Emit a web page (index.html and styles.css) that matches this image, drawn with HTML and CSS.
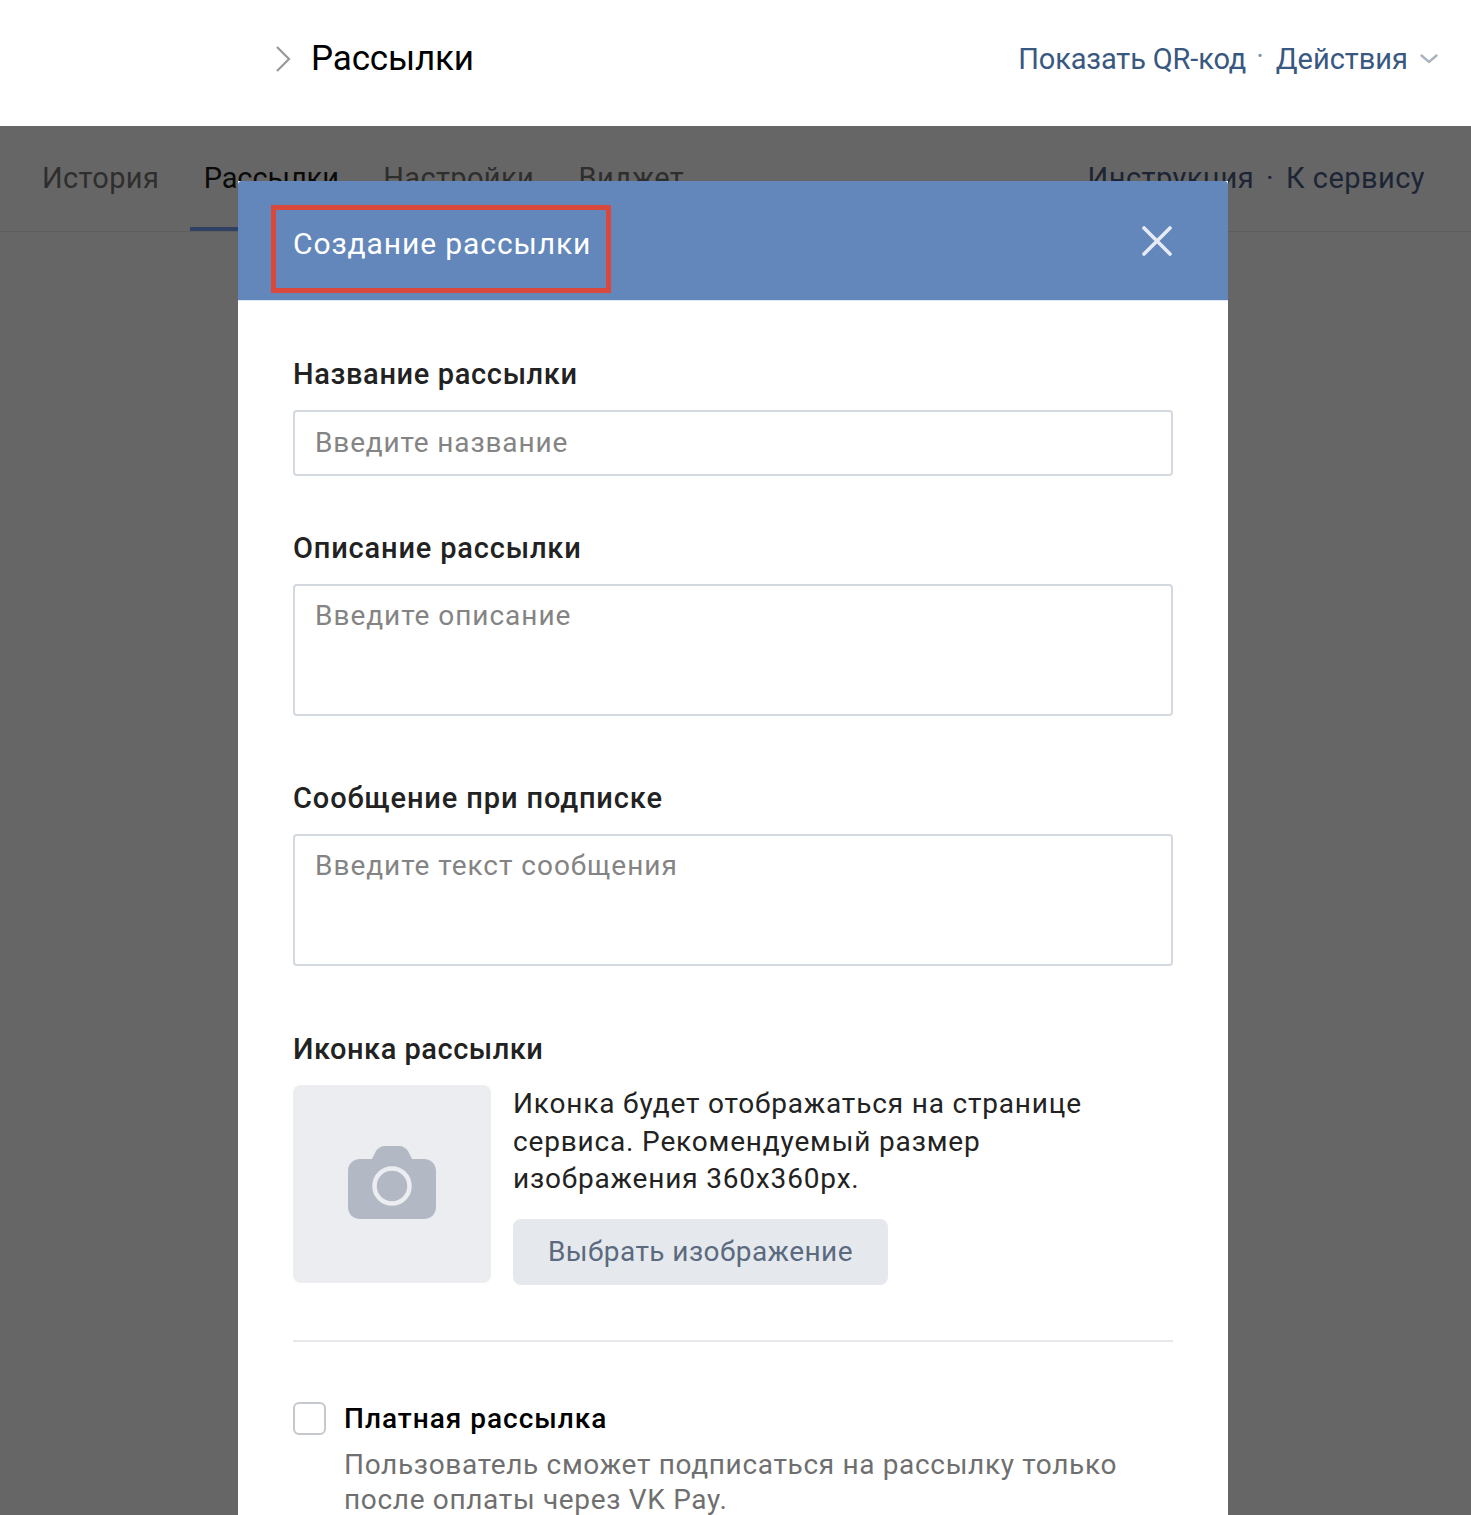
FILE: index.html
```html
<!DOCTYPE html>
<html>
<head>
    <title>Рассылки</title>
    <link rel="stylesheet" href="styles.css">
</head>
<body>
    <div class="topbar">
        <div class="crumb">
            <svg class="crumb-arrow" width="16" height="28" viewBox="0 0 16 28"><path d="M2 2l12 12L2 26" fill="none" stroke="#999" stroke-width="2.2"/></svg>
            <span class="crumb-title">Рассылки</span>
        </div>
        <div class="top-links">
            <a class="top-link link-qr">Показать QR-код</a>
            <span class="dot">·</span>
            <a class="top-link">Действия</a>
            <svg class="top-caret" width="18" height="10" viewBox="0 0 18 10"><path d="M1.5 1.5L9 8l7.500-6.500" fill="none" stroke="#a9b4c0" stroke-width="2.4" stroke-linecap="round"/></svg>
        </div>
    </div>

    <div class="dimmed">
        <div class="tabs">
            <div class="tab-list">
                <a class="tab">История</a>
                <a class="tab tab-active">Рассылки</a>
                <a class="tab">Настройки</a>
                <a class="tab">Виджет</a>
            </div>
            <div class="tab-links">
                <a>Инструкция</a>
                <span class="dot">·</span>
                <a>К сервису</a>
            </div>
        </div>
    </div>

    <div class="modal">
        <div class="modal-head">
            <div class="modal-title">Создание рассылки</div>
            <svg class="modal-close" width="32" height="32" viewBox="0 0 32 32"><path d="M3 3l26 26M29 3L3 29" fill="none" stroke="#e6ebf5" stroke-width="3.600" stroke-linecap="round"/></svg>
        </div>
        <div class="modal-body">
            <div class="field-label">Название рассылки</div>
            <input class="field-input" placeholder="Введите название">

            <div class="field-label label-desc">Описание рассылки</div>
            <textarea class="field-input field-area" placeholder="Введите описание"></textarea>

            <div class="field-label label-msg">Сообщение при подписке</div>
            <textarea class="field-input field-area" placeholder="Введите текст сообщения"></textarea>

            <div class="field-label label-icon">Иконка рассылки</div>
            <div class="icon-row">
                <div class="icon-box">
                    <svg class="camera" width="88" height="73" viewBox="0 0 88 73">
                        <path d="M12 13h12l4-8C30 2 33 0 37 0h14c4 0 7 2 9 5l4 8h12c7 0 12 5 12 12v36c0 7-5 12-12 12H12C5 73 0 68 0 61V25c0-7 5-12 12-12z" fill="#b2b9c5"/>
                        <circle cx="44" cy="40" r="17.500" fill="none" stroke="#ebedf1" stroke-width="4.500"/>
                    </svg>
                </div>
                <div class="icon-side">
                    <div class="icon-text">Иконка будет отображаться на странице сервиса. Рекомендуемый размер изображения 360x360px.</div>
                    <button class="pick-btn">Выбрать изображение</button>
                </div>
            </div>

            <div class="divider"></div>

            <div class="paid">
                <div class="checkbox"></div>
                <div class="paid-text">
                    <div class="paid-title">Платная рассылка</div>
                    <div class="paid-desc">Пользователь сможет подписаться на рассылку только после оплаты через VK Pay.</div>
                </div>
            </div>
        </div>
    </div>
</body>
</html>
```

FILE: styles.css
```css
html, body {
    height: 1515px;
    overflow: hidden;
}
body {
    margin: 0;
    position: relative;
    font-family: Roboto, "Noto Sans", Arial, sans-serif;
    background-color: #666666;
    color: #222222;
}
.topbar {
    height: 126px;
    background-color: #ffffff;
    display: flex;
    justify-content: space-between;
    align-items: center;
    padding: 0 33px 8px 275px;
    box-sizing: border-box;
}
.crumb {
    display: flex;
    align-items: center;
    gap: 20px;
}
.crumb-title {
    font-size: 35px;
    letter-spacing: -0.15px;
    color: #000000;
    margin-bottom: 2px;
}
.top-links {
    display: flex;
    align-items: center;
    font-size: 29px;
    color: #39587f;
}
.link-qr {
    letter-spacing: -0.15px;
}
.top-links .dot {
    margin: -6px 12px 0 10px;
    color: #7f93a8;
}
.top-caret {
    margin-left: 12px;
}
.tabs {
    height: 106px;
    display: flex;
    justify-content: space-between;
    border-bottom: 1px solid #5e5e5e;
    box-sizing: border-box;
    padding: 0 46px 0 42px;
    font-size: 29px;
}
.tab-list {
    display: flex;
    gap: 44.500px;
    letter-spacing: 0.35px;
}
.tab {
    padding-top: 35px;
    color: #2e2e2e;
    position: relative;
}
.tab-active {
    color: #0a0a0a;
    letter-spacing: -0.1px;
}
.tab-active::after {
    content: "";
    position: absolute;
    left: -14px;
    right: -14px;
    bottom: 0;
    height: 4px;
    background-color: #2f4263;
}
.tab-links {
    padding-top: 35px;
    color: #1c2535;
    display: flex;
    letter-spacing: 0.45px;
}
.tab-links .dot {
    margin: 0 12px;
}
.modal {
    position: absolute;
    left: 238px;
    top: 181px;
    width: 990px;
    background-color: #ffffff;
}
.modal-head {
    height: 120px;
    box-sizing: border-box;
    background-color: #6387ba;
    border-bottom: 1px solid #dfe7f2;
    border-radius: 4px 4px 0 0;
    display: flex;
    justify-content: space-between;
    align-items: flex-start;
    padding: 24px 55px 0 33px;
}
.modal-title {
    border: 5px solid #d9483b;
    height: 88px;
    box-sizing: border-box;
    padding: 0 15px 0 17px;
    font-size: 30px;
    line-height: 68px;
    letter-spacing: 0.9px;
    color: #ffffff;
    white-space: nowrap;
}
.modal-close {
    margin-top: 20px;
}
.modal-body {
    padding: 55px 55px 0;
}
.field-label {
    font-size: 29px;
    line-height: 36px;
    font-weight: 500;
    letter-spacing: 0.65px;
    color: #222222;
    margin-bottom: 18px;
}
.label-desc {
    margin-top: 54px;
    letter-spacing: 0.83px;
}
.label-msg {
    margin-top: 64px;
    letter-spacing: 0.88px;
}
.label-icon {
    margin-top: 65px;
    letter-spacing: 0.52px;
}
.field-input {
    display: block;
    width: 100%;
    height: 66px;
    box-sizing: border-box;
    border: 2px solid #d3d9de;
    border-radius: 4px;
    padding: 0 20px 2px;
    margin: 0;
    font-family: inherit;
    font-size: 28px;
    letter-spacing: 0.85px;
    color: #222222;
    background-color: #ffffff;
    outline: none;
    resize: none;
}
.field-input::placeholder {
    color: #848484;
    opacity: 1;
}
.field-area {
    height: 132px;
    padding-top: 12px;
    line-height: 36px;
    letter-spacing: 0.97px;
}
.icon-row {
    display: flex;
    gap: 22px;
}
.icon-box {
    width: 198px;
    height: 198px;
    border-radius: 8px;
    background-color: #ebedf1;
    display: flex;
    align-items: center;
    justify-content: center;
}
.camera {
    margin-bottom: 3px;
}
.icon-side {
    flex: 1;
}
.icon-text {
    font-size: 28px;
    line-height: 37.500px;
    letter-spacing: 0.83px;
    color: #222222;
    padding-right: 60px;
    margin-bottom: 21px;
}
.pick-btn {
    display: block;
    width: 375px;
    height: 66px;
    border: 0;
    border-radius: 8px;
    background-color: #e5e9ee;
    color: #5b6a7e;
    font-family: inherit;
    font-size: 28px;
    letter-spacing: 0.45px;
}
.divider {
    height: 2px;
    background-color: #e7e8ec;
    margin-top: 55px;
}
.paid {
    display: flex;
    gap: 18px;
    margin-top: 60px;
}
.checkbox {
    width: 33px;
    height: 33px;
    box-sizing: border-box;
    flex: none;
    border: 2px solid #c5c9ce;
    border-radius: 6px;
}
.paid-title {
    font-size: 28px;
    line-height: 33px;
    font-weight: 500;
    letter-spacing: 1px;
    color: #000000;
}
.paid-desc {
    margin-top: 12px;
    font-size: 28px;
    line-height: 35px;
    letter-spacing: 0.67px;
    color: #6f6f6f;
    padding-right: 40px;
}
```
